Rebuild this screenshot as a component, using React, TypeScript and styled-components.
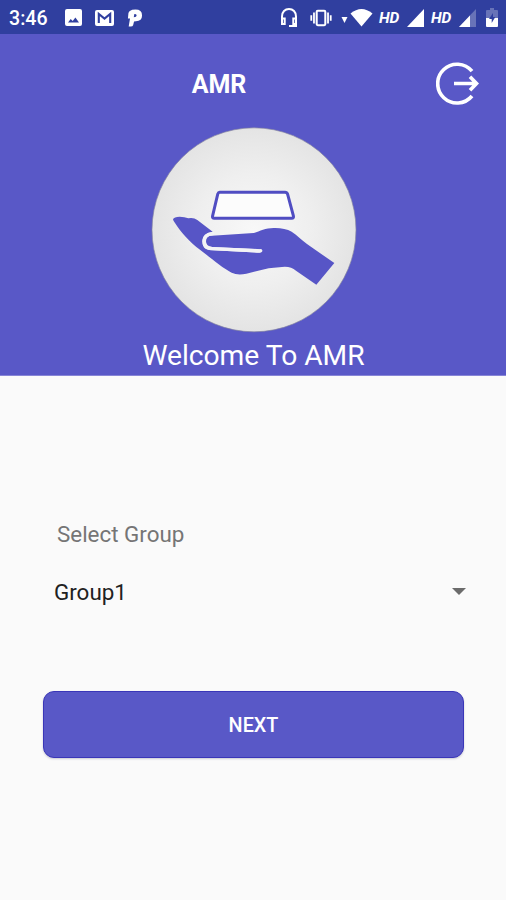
import React from "react";
import styled, { createGlobalStyle } from "styled-components";

const GlobalStyle = createGlobalStyle`
  * { box-sizing: border-box; }
  body { margin: 0; background: #fafafa; font-family: Roboto, "Liberation Sans", sans-serif; }
`;

const Screen = styled.div`
  width: 506px;
  height: 900px;
  overflow: hidden;
  display: flex;
  flex-direction: column;
  background: #fafafa;
`;

const StatusBar = styled.header`
  height: 34px;
  flex: none;
  display: flex;
  align-items: center;
  justify-content: space-between;
  padding: 1px 8px 0 9px;
  background: #303f9f;
  color: #fff;
`;

const StatusGroup = styled.div`
  display: flex;
  align-items: center;
`;

const Clock = styled.span`
  width: 39px;
  padding-top: 2px;
  font-size: 19.6px;
  font-weight: 500;
  line-height: 34px;
`;

const Glyph = styled.svg<{ $gap: number }>`
  display: block;
  flex: none;
  margin-left: ${(p) => p.$gap}px;
`;

const HdLabel = styled.span<{ $gap: number }>`
  width: 22px;
  margin-left: ${(p) => p.$gap}px;
  font-size: 15.5px;
  font-weight: 700;
  font-style: italic;
  line-height: 34px;
`;

const Hero = styled.section`
  height: 342px;
  flex: none;
  display: flex;
  flex-direction: column;
  align-items: center;
  background: #5958c7;
  border-bottom: 1px solid #8785d6;
  color: #fff;
`;

const AppBar = styled.div`
  width: 100%;
  height: 93px;
  flex: none;
  display: grid;
  grid-template-columns: 436px 44px;
  align-items: center;
  padding-top: 6px;
`;

const Title = styled.h1`
  margin: 0;
  padding: 2px 0 0 2px;
  font-size: 25px;
  font-weight: 700;
  line-height: 30px;
  text-align: center;
`;

const IconButton = styled.button`
  padding: 0;
  border: 0;
  background: none;
  width: 44px;
  height: 44px;
`;

const Logo = styled.svg`
  display: block;
  flex: none;
  width: 206px;
  height: 206px;
  margin-left: 1px;
`;

const Welcome = styled.p`
  margin: 5px 0 0 1px;
  font-size: 28.2px;
  line-height: 36px;
  white-space: nowrap;
`;

const Form = styled.main`
  display: flex;
  flex-direction: column;
  padding: 142px 42px 0 43px;
`;

const FieldLabel = styled.label`
  padding-left: 14px;
  font-size: 22.4px;
  line-height: 32px;
  color: #757575;
`;

const Select = styled.div`
  height: 40px;
  margin-top: 22px;
  padding: 0 0 0 11px;
  display: flex;
  align-items: center;
  justify-content: space-between;
  font-size: 22.4px;
  color: #212121;
`;

const Caret = styled.svg`
  display: block;
  margin: 0 -2px 2px 0;
`;

const NextButton = styled.button`
  height: 67px;
  margin-top: 79px;
  padding-top: 3px;
  border: 1px solid #3a36b8;
  border-radius: 11px;
  background: #5958c7;
  box-shadow: 0 1px 2px rgba(60, 60, 100, 0.25);
  color: #fff;
  font: 500 19.8px Roboto, "Liberation Sans", sans-serif;
`;

function SystemStatus() {
  return (
    <StatusBar>
      <StatusGroup>
        <Clock>3:46</Clock>
        <Glyph $gap={17} width="17" height="17" viewBox="0 0 17 17">
          <path fill="#fff" fillRule="evenodd" d="M2 0h13q2 0 2 2v13q0 2-2 2H2q-2 0-2-2V2Q0 0 2 0Zm1 13.5h11l-3.6-5-2.7 3.6-2-2.1Z" />
        </Glyph>
        <Glyph $gap={13} width="19" height="16" viewBox="0 0 19 16">
          <rect width="19" height="16" rx="2" fill="#fff" />
          <path d="M3.8 13V4l5.7 4.6L15.2 4v9" fill="none" stroke="#303f9f" strokeWidth="2.1" />
        </Glyph>
        <Glyph $gap={13} width="16" height="18" viewBox="0 0 17 18">
          <path fill="#fff" fillRule="evenodd" d="M3 1.5Q5 0 9 0q7 0 7 6.3 0 5.7-6.5 6.200l-2 .2-1 4Q6 18 4 18H1.800L3.200 9.500H1L1.500 4Q1.800 2.500 3 1.500ZM7.800 4.700 7.200 8.200q3 0 3-2 0-1.500-2.400-1.500Z" />
        </Glyph>
      </StatusGroup>
      <StatusGroup>
        <Glyph $gap={0} width="18" height="20" viewBox="0 0 18 20">
          <g fill="none" stroke="#fff" strokeWidth="2">
            <path d="M2 15V8.500C2 4 5 1 9 1s7 3 7 7.500V18H9" />
            <path d="M2 10.500h2.700V16H2zM13.300 10.500H16V16h-2.700z" />
          </g>
        </Glyph>
        <Glyph $gap={11} width="24" height="18" viewBox="0 0 24 20">
          <rect x="7.200" y="2" width="9.600" height="16" rx="1.200" fill="none" stroke="#fff" strokeWidth="2.300" />
          <path d="M4.200 4v12M19.800 4v12M1.200 7v6M22.800 7v6" stroke="#fff" strokeWidth="2" />
        </Glyph>
        <Glyph $gap={8} width="7" height="18" viewBox="0 0 7 18">
          <path d="M0.500 8h6l-3 6z" fill="#fff" />
        </Glyph>
        <Glyph $gap={2} width="23" height="18" viewBox="0 0 23 18">
          <path d="M0.500 4.500Q11.500-4.500 22.500 4.500L11.500 17.500Z" fill="#fff" />
        </Glyph>
        <HdLabel $gap={6}>HD</HdLabel>
        <Glyph $gap={6} width="17" height="18" viewBox="0 0 17 18">
          <path d="M17 0v18H0z" fill="#fff" />
        </Glyph>
        <HdLabel $gap={7}>HD</HdLabel>
        <Glyph $gap={6} width="17" height="18" viewBox="0 0 17 18">
          <path d="M17 0v18H0z" fill="#6873b8" />
          <path d="M11 6.400V18H0z" fill="#fff" />
        </Glyph>
        <Glyph $gap={10} width="12" height="19" viewBox="0 0 12 19">
          <path d="M1 2h3V0h4v2h3q1 0 1 1v8H0V3q0-1 1-1Z" fill="#6873b8" />
          <path d="M0 10h12v8q0 1-1 1H1q-1 0-1-1Z" fill="#fff" />
          <path d="M7 5 3 11h2.700v4L9.300 9H7Z" fill="#303f9f" />
        </Glyph>
      </StatusGroup>
    </StatusBar>
  );
}

function HandLogo() {
  return (
    <Logo viewBox="32 20 618 618" role="img" aria-label="AMR logo">
      <defs>
        <radialGradient id="disc">
          <stop offset="0" stopColor="#f8f8f8" />
          <stop offset="0.55" stopColor="#efefef" />
          <stop offset="1" stopColor="#e4e4e4" />
        </radialGradient>
      </defs>
      <circle cx="341" cy="328.500" r="306" fill="url(#disc)" stroke="#85859f" strokeWidth="2" />
      <path d="M238 216H434Q440 216 442 222L459 286Q461 294 454 294H222Q215 294 217 286L232 222Q234 216 238 216Z" fill="#fcfcfc" stroke="#504dc2" strokeWidth="9" />
      <path
        d="M98 297Q101 289 118 289Q133 289 144 294Q160 291 171 299L217 334C198 338 186 346 186 363C186 384 198 390 217 390L350 397Q364 398 364 391Q363 386 350 386L215 380Q197 378 197 363Q197 346 215 346L340 338C358 333 375 323 400 323Q432 322 454 334C472 346 484 359 500 371Q524 388 582 428L528 493L467 451Q451 437 425 440L385 444L318 460Q292 466 274 457C246 443 211 412 180 389C148 366 120 334 104 308Q98 300 98 297Z"
        fill="#5755c6"
      />
      <path d="M217 340C201 341 191 349 191 363C191 378 200 385 217 385L350 391.500Q359 392 361 391" fill="none" stroke="#f3f3f5" strokeWidth="10" strokeLinecap="round" />
    </Logo>
  );
}

export default function App() {
  return (
    <>
      <GlobalStyle />
      <Screen>
        <SystemStatus />
        <Hero>
          <AppBar>
            <Title>AMR</Title>
            <IconButton aria-label="Log out">
              <svg width="44" height="44" viewBox="0 0 44 44" fill="none" stroke="#fff" strokeWidth="3.600">
                <path d="M36 9.200A19.400 19.400 0 1 0 36 34" />
                <path d="M18 21.500H40M34 14.800 40.500 21.500 34 28.200" />
              </svg>
            </IconButton>
          </AppBar>
          <HandLogo />
          <Welcome>Welcome To AMR</Welcome>
        </Hero>
        <Form>
          <FieldLabel>Select Group</FieldLabel>
          <Select role="combobox" aria-expanded="false">
            <span>Group1</span>
            <Caret width="14" height="7" viewBox="0 0 14 7">
              <path d="M0 0h14L7 7z" fill="#6b6b6b" />
            </Caret>
          </Select>
          <NextButton>NEXT</NextButton>
        </Form>
      </Screen>
    </>
  );
}
